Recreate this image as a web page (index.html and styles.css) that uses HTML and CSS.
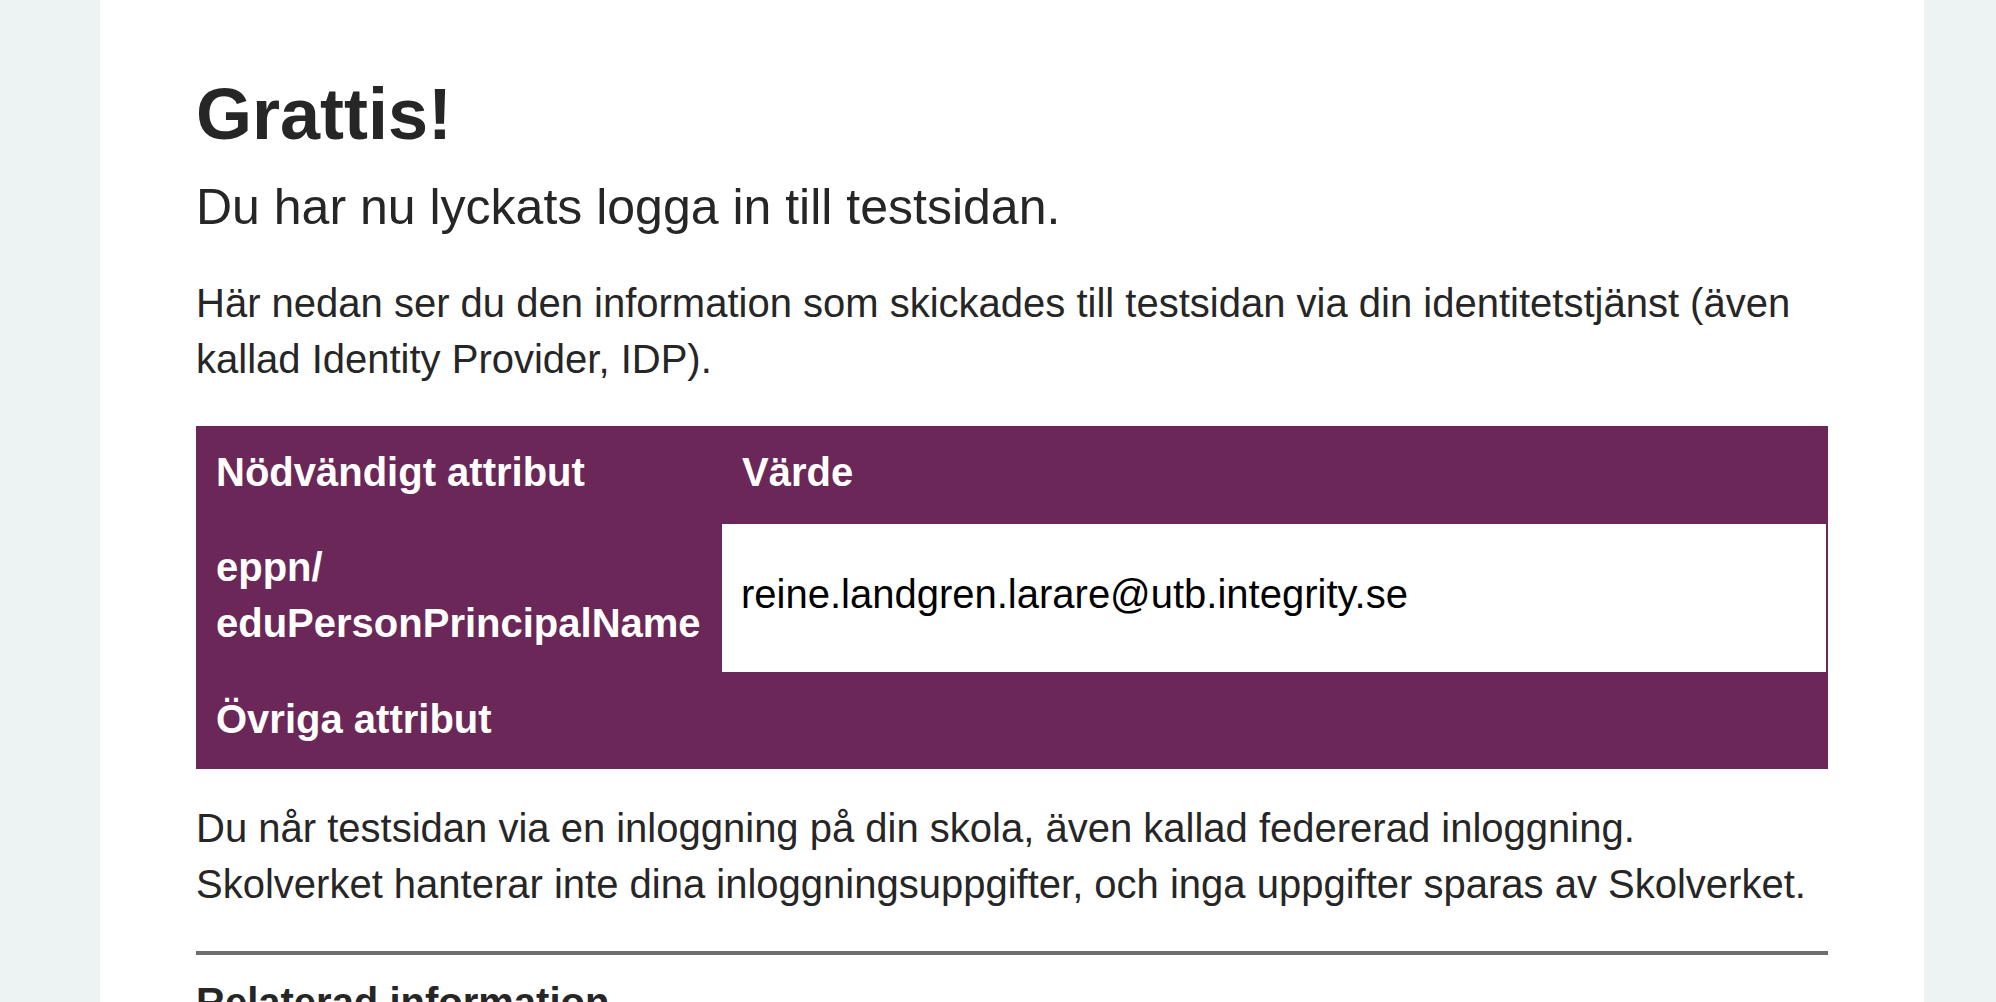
FILE: index.html
```html
<!DOCTYPE html>
<html lang="sv">
<head>
<meta charset="utf-8">
<title>Grattis!</title>
<link rel="stylesheet" href="styles.css">
</head>
<body>
<main class="page">
  <h1 class="title">Grattis!</h1>
  <p class="lead">Du har nu lyckats logga in till testsidan.</p>
  <p class="text">Här nedan ser du den information som skickades till testsidan via din identitetstjänst (även kallad Identity Provider, IDP).</p>
  <table class="attrs">
    <thead>
      <tr>
        <th class="head-cell name-col">Nödvändigt attribut</th>
        <th class="head-cell">Värde</th>
      </tr>
    </thead>
    <tbody>
      <tr>
        <th class="row-head">eppn/<br>eduPersonPrincipalName</th>
        <td class="value">reine.landgren.larare@utb.integrity.se</td>
      </tr>
      <tr>
        <th class="group-head" colspan="2">Övriga attribut</th>
      </tr>
    </tbody>
  </table>
  <p class="text after">Du når testsidan via en inloggning på din skola, även kallad federerad inloggning.<br>Skolverket hanterar inte dina inloggningsuppgifter, och inga uppgifter sparas av Skolverket.</p>
  <hr class="rule">
  <h2 class="related">Relaterad information</h2>
</main>
</body>
</html>
```

FILE: styles.css
```css
html, body {
  margin: 0;
  padding: 0;
}
body {
  background: #edf3f3;
  font-family: "Liberation Sans", Arial, Helvetica, sans-serif;
  color: #262626;
  padding: 0 72px 0 100px;
  overflow: hidden;
}
.page {
  background: #ffffff;
  padding: 71px 96px 40px 96px;
  min-height: 1002px;
  box-sizing: border-box;
}
.title {
  margin: 0;
  font-size: 72px;
  line-height: 86px;
  font-weight: 700;
}
.lead {
  margin: 20px 0 0 0;
  font-size: 50px;
  line-height: 60px;
}
.text {
  margin: 39px 0 0 0;
  font-size: 40px;
  line-height: 55.5px;
}
.attrs {
  margin-top: 39px;
  width: 100%;
  border-collapse: collapse;
  background: #6a2758;
  color: #ffffff;
  font-size: 40px;
  line-height: 56px;
}
.attrs th {
  text-align: left;
  font-weight: 700;
  padding-left: 20px;
  padding-right: 16px;
}
.head-cell {
  padding-top: 18px;
  padding-bottom: 24px;
}
.name-col {
  width: 490px;
}
.row-head {
  padding-top: 15px;
  padding-bottom: 21px;
  vertical-align: top;
}
.value {
  background: #ffffff;
  color: #000000;
  padding: 0 20px 8px 19px;
  vertical-align: middle;
  border-right: 2px solid #6a2758;
}
.group-head {
  padding-top: 19px;
  padding-bottom: 22px;
}
.text.after {
  margin-top: 32px;
}
.rule {
  margin: 39px 0 0 0;
  border: 0;
  height: 4px;
  background: #6e6e6e;
}
.related {
  margin: 19px 0 0 0;
  font-size: 40px;
  line-height: 56px;
  font-weight: 700;
}
```
